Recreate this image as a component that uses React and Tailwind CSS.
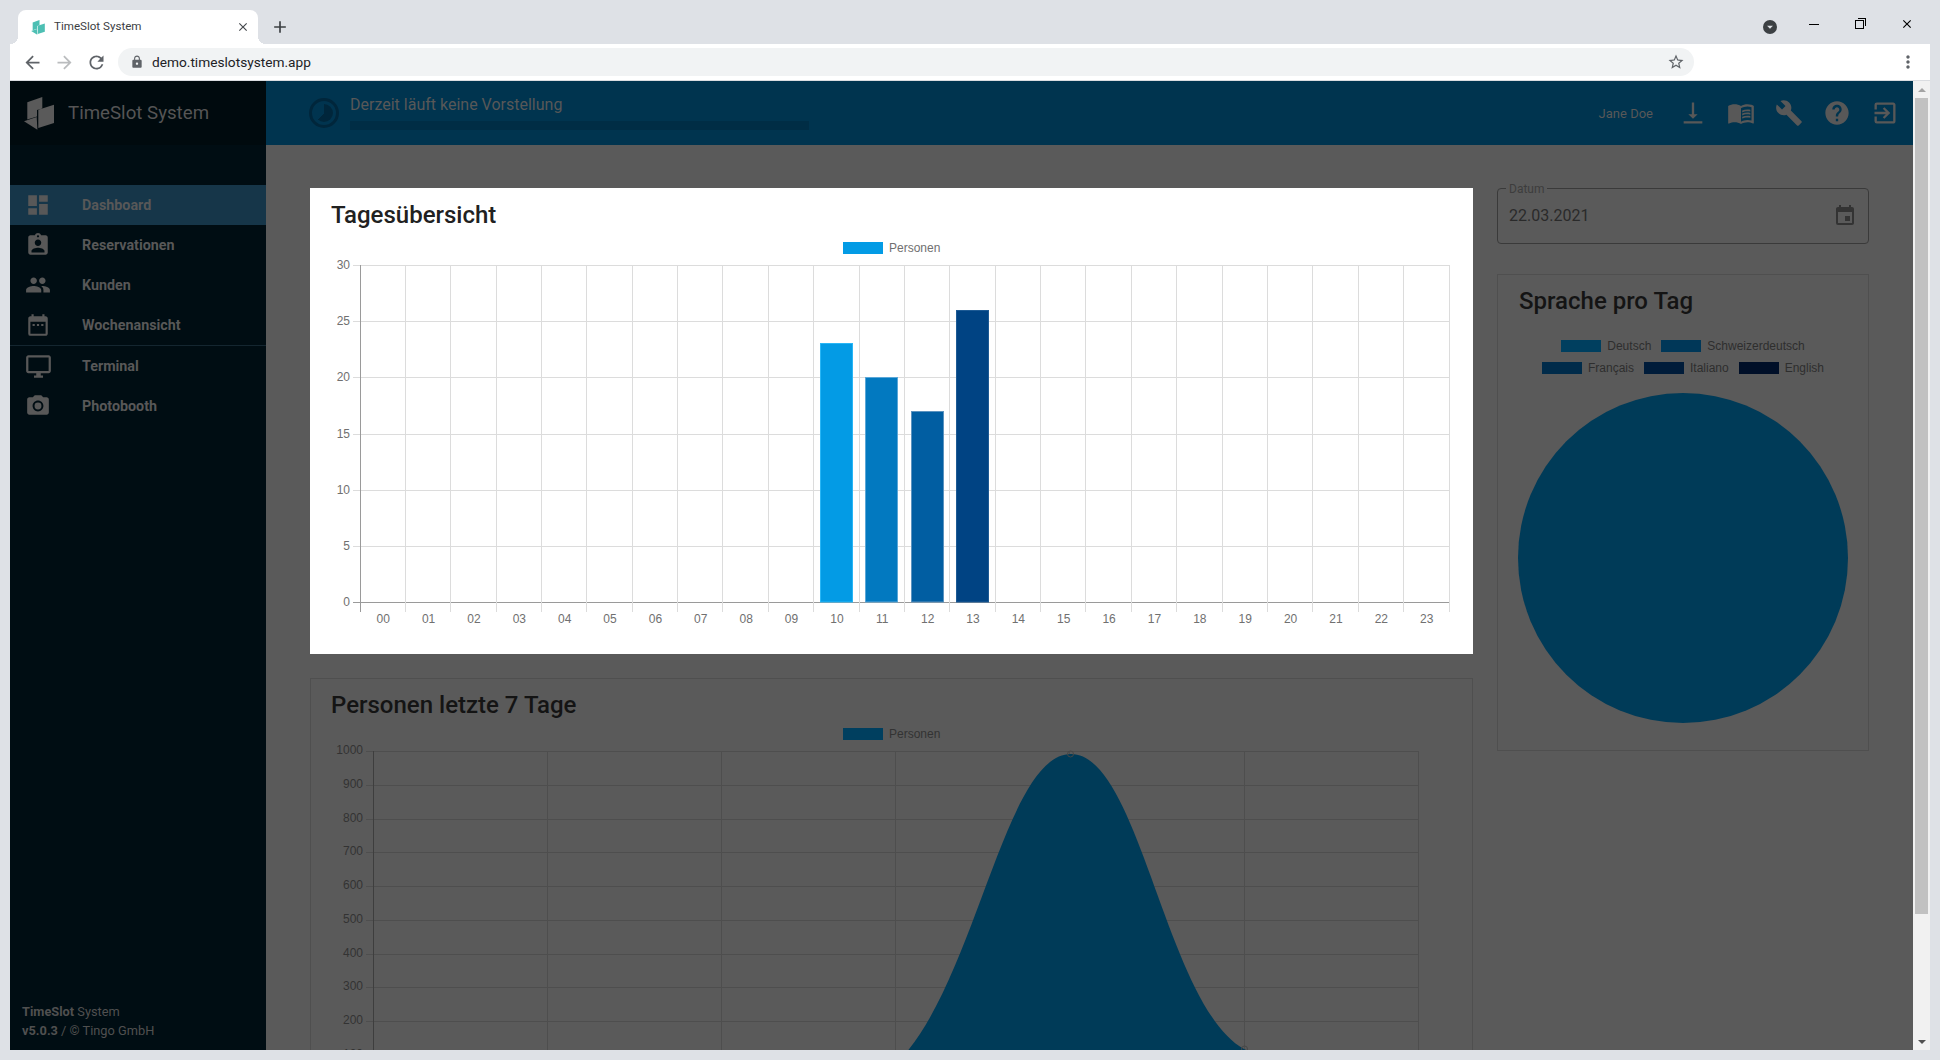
import {
  MdDashboard,
  MdAssignmentInd,
  MdPeople,
  MdDateRange,
  MdOutlineDesktopWindows,
  MdPhotoCamera,
  MdVerticalAlignBottom,
  MdMenuBook,
  MdBuild,
  MdHelp,
  MdExitToApp,
  MdEvent,
  MdClose,
  MdAdd,
  MdArrowBack,
  MdArrowForward,
  MdRefresh,
  MdLock,
  MdStarBorder,
  MdMoreVert,
  MdArrowDropDown,
} from "react-icons/md";

const navTop = [
  { label: "Dashboard", icon: MdDashboard, active: true },
  { label: "Reservationen", icon: MdAssignmentInd },
  { label: "Kunden", icon: MdPeople },
  { label: "Wochenansicht", icon: MdDateRange },
];
const navBottom = [
  { label: "Terminal", icon: MdOutlineDesktopWindows },
  { label: "Photobooth", icon: MdPhotoCamera },
];
const topIcons = [MdVerticalAlignBottom, MdMenuBook, MdBuild, MdHelp, MdExitToApp];

const hours = Array.from({ length: 24 }, (_, i) => String(i).padStart(2, "0"));

const bars = [
  { x: 820, top: 343, fill: "#039be5", stroke: "#29b6f6" },
  { x: 865, top: 377, fill: "#0279c0", stroke: "#5aa7d8" },
  { x: 911, top: 411, fill: "#015ea2", stroke: "#5c93bf" },
  { x: 956, top: 310, fill: "#004383", stroke: "#1d5a94" },
];

const languages = [
  [
    { label: "Deutsch", color: "#003f5f" },
    { label: "Schweizerdeutsch", color: "#003758" },
  ],
  [
    { label: "Français", color: "#002b4a" },
    { label: "Italiano", color: "#001c3a" },
    { label: "English", color: "#000f28" },
  ],
];

const Logo = ({ className, fill }) => (
  <svg viewBox="0 0 30 33" className={className} fill={fill}>
    <polygon points="3.3,5.3 18.3,0 18.3,11.5 13,13 13,19.5 3.3,22.5" />
    <polygon points="14.3,12.7 30,7.7 30,26 14.3,31" />
    <polygon points="0,24.3 12.7,20 13.4,32.7" />
  </svg>
);

const NavItem = ({ item }) => {
  const Icon = item.icon;
  return (
    <div
      className={`flex h-10 items-center text-[14.3px] font-bold text-[#585858] ${
        item.active ? "bg-[#163649]" : ""
      }`}
    >
      <div className="flex w-[56px] justify-center">
        <Icon size={item.icon === MdOutlineDesktopWindows ? 27 : 26} />
      </div>
      <span className="translate-y-px pl-[16px]">{item.label}</span>
    </div>
  );
};

const DayChart = () => (
  <svg viewBox="310 236 1163 418" className="block w-full h-[418px]">
    <rect x="843" y="242" width="40" height="12" fill="#039be5" />
    <text x="889" y="252" fontSize="12" fill="#707070" fontFamily="Liberation Sans">
      Personen
    </text>
    {[0, 5, 10, 15, 20, 25, 30].map((v) => {
      const y = Math.round(602 - v * 11.233) + 0.5;
      return (
        <g key={v}>
          <line x1="353" x2="1449" y1={y} y2={y} stroke={v === 0 ? "#9a9a9a" : "#dcdcdc"} />
          <text x="350" y={y + 3.5} textAnchor="end" fontSize="12" fill="#707070" fontFamily="Liberation Sans">
            {v}
          </text>
        </g>
      );
    })}
    {hours.map((h, i) => {
      const x = Math.floor(360 + i * 45.37) + 0.5;
      return (
        <g key={h}>
          <line x1={x} x2={x} y1="265" y2="612" stroke={i === 0 ? "#9a9a9a" : "#dcdcdc"} />
          <text x={360.5 + i * 45.37 + 22.7} y="623" textAnchor="middle" fontSize="12" fill="#707070" fontFamily="Liberation Sans">
            {h}
          </text>
        </g>
      );
    })}
    <line x1="1449.5" x2="1449.5" y1="265" y2="612" stroke="#dcdcdc" />
    {bars.map((b) => (
      <rect
        key={b.x}
        x={b.x + 0.5}
        y={b.top + 0.5}
        width="32"
        height={602 - b.top - 0.5}
        fill={b.fill}
        stroke={b.stroke}
      />
    ))}
  </svg>
);

const WeekChart = () => (
  <svg viewBox="311 724 1161 340" className="block w-full h-[340px]">
    <rect x="843" y="728" width="40" height="12" fill="#003f5f" />
    <text x="889" y="738" fontSize="12" fill="#333" fontFamily="Liberation Sans">
      Personen
    </text>
    {[100, 200, 300, 400, 500, 600, 700, 800, 900, 1000].map((v) => {
      const y = Math.round(751 + (1000 - v) * 0.3375) + 0.5;
      return (
        <g key={v}>
          <line x1="366" x2="1418" y1={y} y2={y} stroke="#4e4e4e" />
          <text x="363" y={y + 2.5} textAnchor="end" fontSize="12" fill="#333" fontFamily="Liberation Sans">
            {v}
          </text>
        </g>
      );
    })}
    {[0, 1, 2, 3, 4, 5, 6].map((i) => {
      const x = Math.round(373 + i * 174.1) + 0.5;
      return <line key={i} x1={x} x2={x} y1="751" y2="1060" stroke={i === 0 ? "#3e3e3e" : "#4e4e4e"} />;
    })}
    <path
      d="M889,1070 C974,1000 1002,754 1071,754 C1140,754 1166,1006 1244,1049 L1300,1075 L889,1100 Z"
      fill="#003b58"
    />
    <circle cx="1070.5" cy="754" r="3" fill="none" stroke="#474747" />
    <circle cx="1244.5" cy="1049" r="3" fill="none" stroke="#474747" />
  </svg>
);

const App = () => {
  return (
    <div className="flex h-screen w-screen flex-col overflow-hidden bg-[#dee1e6] font-['Roboto',sans-serif]">
      {/* browser tab strip */}
      <div className="flex h-[44px] shrink-0 items-end pl-[18px]">
        <div className="relative flex h-[34px] w-[240px] items-center rounded-t-lg bg-white pl-[13px] pr-[8px] before:absolute before:-left-2 before:bottom-0 before:h-2 before:w-2 before:bg-[radial-gradient(circle_at_0_0,transparent_8px,white_8px)] after:absolute after:-right-2 after:bottom-0 after:h-2 after:w-2 after:bg-[radial-gradient(circle_at_100%_0,transparent_8px,white_8px)]">
          <Logo className="h-[15px] w-[14px]" fill="#4dbfb3" />
          <span className="ml-[9px] flex-1 text-[11.6px] text-[#3c4043]">TimeSlot System</span>
          <MdClose size={14} className="text-[#45494d]" />
        </div>
        <MdAdd size={20} className="mb-[7px] ml-[12px] text-[#3c4043]" />
        <div className="mb-[10px] ml-auto flex items-center">
          <div className="flex h-[14px] w-[14px] items-center justify-center rounded-full bg-[#3c4043] text-[#dee1e6]">
            <MdArrowDropDown size={16} />
          </div>
          <div className="ml-[32px] h-px w-[10px] -translate-y-[3px] bg-black" />
          <div className="relative ml-[36px] h-[9px] w-[9px] -translate-y-[3px] border border-black">
            <div className="absolute -right-[3px] -top-[3px] h-[8px] w-[8px] border-r border-t border-black" />
          </div>
          <MdClose size={14} className="ml-[36px] mr-[26px] -translate-y-[3px] text-black" />
        </div>
      </div>

      <div className="mx-[10px] flex min-h-0 flex-1 flex-col">
        {/* toolbar */}
        <div className="flex h-[37px] shrink-0 items-center border-b border-[#dadce0] bg-white pl-[12px]">
          <MdArrowBack size={21} className="text-[#5f6368]" />
          <MdArrowForward size={21} className="ml-[11px] text-[#babcbe]" />
          <MdRefresh size={21} className="ml-[11px] text-[#5f6368]" />
          <div className="ml-[11px] flex h-[28px] w-[1576px] items-center rounded-full bg-[#f1f3f4] pl-[12px] pr-[9px]">
            <MdLock size={14} className="text-[#5f6368]" />
            <span className="ml-[8px] flex-1 text-[13.7px] text-[#202124]">demo.timeslotsystem.app</span>
            <MdStarBorder size={18} className="text-[#5f6368]" />
          </div>
          <MdMoreVert size={20} className="ml-[204px] text-[#5f6368]" />
        </div>

        {/* page */}
        <div className="flex min-h-0 flex-1">
          <aside className="flex w-[256px] shrink-0 flex-col bg-[#000d13]">
            <div className="flex h-[64px] items-center gap-[14px] bg-[#000a0e] pl-[14px]">
              <Logo className="h-[33px] w-[30px]" fill="#5a5a5a" />
              <span className="text-[18.7px] text-[#555]">TimeSlot System</span>
            </div>
            <nav className="mt-[40px]">
              {navTop.map((item) => (
                <NavItem key={item.label} item={item} />
              ))}
              <div className="border-t border-[#142630]">
                {navBottom.map((item) => (
                  <NavItem key={item.label} item={item} />
                ))}
              </div>
            </nav>
            <div className="mt-auto pb-[10px] pl-[12px] text-[12.8px] leading-[19px] text-[#505050]">
              <div>
                <b>TimeSlot</b> System
              </div>
              <div>
                <b>v5.0.3</b> / © Tingo GmbH
              </div>
            </div>
          </aside>

          <div className="flex min-w-0 flex-1 flex-col bg-[#5a5a5a]">
            <header className="flex h-[64px] shrink-0 items-center bg-[#00344f] pl-[43px] pr-[14px] text-[#585858]">
              <div className="relative h-[30px] w-[30px] rounded-full border-[3px] border-[#00263b]">
                <div className="absolute inset-[3px] rounded-full bg-[conic-gradient(#00263b_0_62%,transparent_62%)]" />
              </div>
              <div className="ml-[11px] -translate-y-px">
                <div className="text-base leading-[20px]">Derzeit läuft keine Vorstellung</div>
                <div className="mt-[6px] h-[9px] w-[459px] bg-[#002d45]" />
              </div>
              <span className="ml-auto mr-[26px] translate-y-px text-[13px]">Jane Doe</span>
              <div className="flex gap-[20px]">
                {topIcons.map((Icon, i) => (
                  <Icon key={i} size={28} />
                ))}
              </div>
            </header>

            <main className="flex min-h-0 flex-1 gap-[24px] overflow-hidden pl-[44px] pt-[43px]">
              <div className="flex w-[1163px] shrink-0 flex-col gap-[24px]">
                <section className="h-[466px] shrink-0 bg-white">
                  <h2 className="pb-[2px] pl-[21px] pt-[9px] text-2xl leading-[37px] font-[550] text-[#212121]">
                    Tagesübersicht
                  </h2>
                  <DayChart />
                </section>
                <section className="shrink-0 border border-[#4f4f4f]">
                  <h2 className="pb-px pl-[20px] pt-[9px] text-2xl leading-[35px] font-[550] text-[#141414]">
                    Personen letzte 7 Tage
                  </h2>
                  <WeekChart />
                </section>
              </div>

              <div className="flex w-[372px] shrink-0 flex-col">
                <div className="relative flex h-[56px] items-center justify-between rounded border border-[#3a3a3a] px-[11px] text-[#2a2a2a]">
                  <span className="absolute -top-[6px] left-[8px] bg-[#5a5a5a] px-[3px] text-xs leading-[12px] text-[#3d3d3d]">
                    Datum
                  </span>
                  <span className="text-base">22.03.2021</span>
                  <MdEvent size={24} className="text-[#333]" />
                </div>
                <section className="mt-[30px] h-[477px] border border-[#4f4f4f]">
                  <h2 className="pl-[21px] pt-[9px] text-2xl leading-[35px] font-[550] text-[#141414]">
                    Sprache pro Tag
                  </h2>
                  <div className="mt-[18px] flex flex-col items-center gap-[4px] font-['Liberation_Sans',sans-serif] text-xs leading-[18px] text-[#2e2e2e]">
                    {languages.map((row, i) => (
                      <div key={i} className="flex gap-[10px]">
                        {row.map((l) => (
                          <div key={l.label} className="flex items-center gap-[6px]">
                            <svg width="40" height="12">
                              <rect width="40" height="12" fill={l.color} />
                            </svg>
                            {l.label}
                          </div>
                        ))}
                      </div>
                    ))}
                  </div>
                  <div className="mx-auto mt-[16px] h-[330px] w-[330px] rounded-full bg-[#003b58]" />
                </section>
              </div>
            </main>
          </div>

          {/* scrollbar */}
          <div className="flex w-[17px] shrink-0 flex-col bg-[#f1f1f1]">
            <div className="flex h-[17px] items-center justify-center">
              <div className="h-0 w-0 border-x-[4px] border-b-[4px] border-x-transparent border-b-[#a3a3a3]" />
            </div>
            <div className="mx-auto h-[816px] w-[13px] bg-[#c1c1c1]" />
            <div className="mt-auto flex h-[17px] items-center justify-center">
              <div className="h-0 w-0 border-x-[4px] border-t-[4px] border-x-transparent border-t-[#505050]" />
            </div>
          </div>
        </div>
      </div>
      <div className="h-[10px] shrink-0" />
    </div>
  );
};

export default App;
